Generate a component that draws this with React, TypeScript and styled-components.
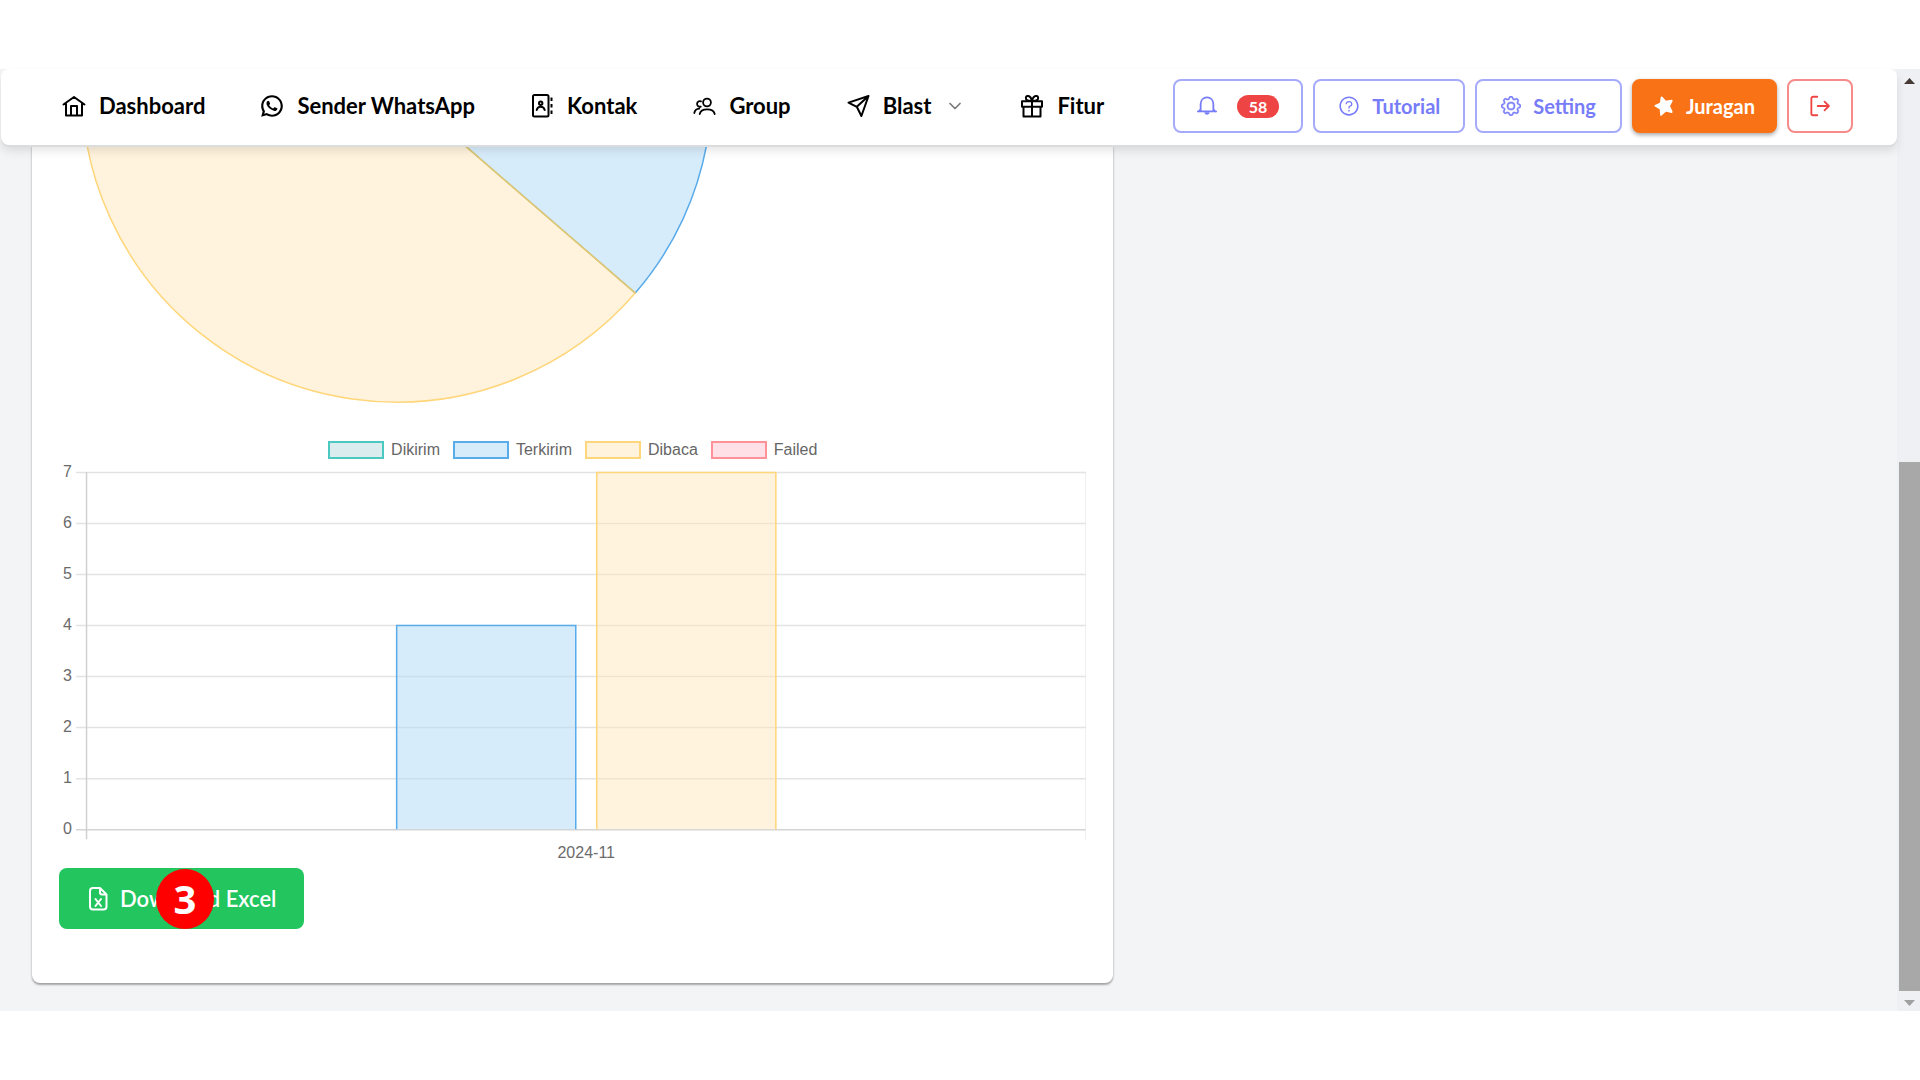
import React from "react";
import styled, { createGlobalStyle, css } from "styled-components";
import { RiWhatsappLine } from "react-icons/ri";
import { AiOutlineQuestionCircle } from "react-icons/ai";
import { BsGear } from "react-icons/bs";
import { FiChevronDown } from "react-icons/fi";

const GlobalStyle = createGlobalStyle`
  *, *::before, *::after { box-sizing: border-box; }
  body {
    margin: 0;
    background: #ffffff;
    font-family: Lato, "Open Sans", sans-serif;
    color: #000000;
  }
`;

const Frame = styled.div`
  display: flex;
  flex-direction: column;
  min-height: 100vh;
  padding: 69px 0 69px;
`;

const Screen = styled.div`
  display: flex;
  flex: 1;
  align-items: stretch;
  background: #f3f4f6;
`;

const Page = styled.div`
  display: flex;
  flex-direction: column;
  flex: 1;
  min-width: 0;
`;

const Header = styled.header`
  position: relative;
  z-index: 1;
  display: flex;
  align-items: center;
  justify-content: space-between;
  min-height: 76px;
  margin-left: 1px;
  padding: 0 44px 2px 62px;
  background: #ffffff;
  border-radius: 8px;
  box-shadow: 0 2px 0 #dadcdd, 0 6px 10px rgba(0, 0, 0, 0.1);
`;

const Nav = styled.nav`
  display: flex;
  align-items: center;
  gap: 56px;
`;

const NavLink = styled.a`
  display: flex;
  align-items: center;
  gap: 14px;
  color: #000000;
  font-size: 22px;
  font-weight: 700;
  line-height: 28px;
  text-decoration: none;
  white-space: nowrap;

  svg {
    flex: none;
  }
`;

const Actions = styled.div`
  display: flex;
  align-items: center;
  gap: 10px;
`;

type Tone = "outline" | "solid" | "danger";

const tones = {
  outline: css`
    color: #777cf8;
    border-color: #a5abfa;
    background: #ffffff;
  `,
  solid: css`
    color: #ffffff;
    border-color: #f97316;
    background: #f97316;
    box-shadow: 0 2px 4px rgba(0, 0, 0, 0.35);
  `,
  danger: css`
    color: #ef4444;
    border-color: #f88a8a;
    background: #ffffff;
  `,
};

const ActionButton = styled.button<{ $tone: Tone; $pad: number }>`
  display: flex;
  align-items: center;
  gap: 12px;
  height: 54px;
  padding: 0 ${(p) => p.$pad}px;
  border: 2px solid;
  border-radius: 8px;
  font: 700 20px/24px Lato, sans-serif;
  white-space: nowrap;
  cursor: pointer;
  ${(p) => tones[p.$tone]}
`;

const Count = styled.span`
  margin-left: 8px;
  padding: 0 12px;
  border-radius: 12px;
  background: #ef4444;
  color: #ffffff;
  font-size: 16px;
  line-height: 23px;
`;

const Main = styled.main`
  flex: 1;
  padding: 0 32px 27px;
`;

const Card = styled.section`
  width: 59%;
  padding: 0 27px 54px;
  background: #ffffff;
  border-radius: 0 0 8px 8px;
  box-shadow: 0 2px 2px rgba(0, 0, 0, 0.3), 0 0 3px rgba(0, 0, 0, 0.12);
`;

const Chart = styled.svg`
  display: block;
  width: 100%;
  height: auto;

  text {
    fill: #6b6b6b;
    font-family: "Liberation Sans", Arial, sans-serif;
    font-size: 16px;
  }
`;

const Legend = styled.ul`
  display: flex;
  justify-content: center;
  gap: 13px;
  margin: 13px 0 1px;
  padding: 0;
  list-style: none;
`;

const LegendItem = styled.li<{ $fill: string; $line: string }>`
  display: flex;
  align-items: center;
  gap: 7px;
  color: #666666;
  font: 16px/19px "Liberation Sans", Arial, sans-serif;

  &::before {
    content: "";
    width: 56px;
    height: 18px;
    border: 2px solid ${(p) => p.$line};
    background: ${(p) => p.$fill};
  }
`;

const Download = styled.div`
  position: relative;
  width: fit-content;
`;

const DownloadButton = styled.button`
  display: flex;
  align-items: center;
  gap: 11px;
  height: 61px;
  padding: 0 28px;
  border: 0;
  border-radius: 8px;
  background: #22c55e;
  color: #ffffff;
  font: 600 22px/28px Lato, sans-serif;
  white-space: nowrap;
  cursor: pointer;
`;

const StepMarker = styled.span`
  position: absolute;
  top: 1px;
  left: 97px;
  display: grid;
  place-items: center;
  width: 58px;
  height: 60px;
  border-radius: 50%;
  background: #ff0000;
  color: #ffffff;
  font: 700 40px/60px "Open Sans", sans-serif;
`;

const Scrollbar = styled.div`
  display: flex;
  flex-direction: column;
  width: 23px;
  padding-left: 2px;
  background: #eff0f3;
`;

const ScrollArrow = styled.svg`
  flex: none;
  width: 21px;
  height: 20px;
`;

const Track = styled.div`
  display: flex;
  flex: 1;
  align-items: flex-end;
`;

const Thumb = styled.div`
  width: 100%;
  height: 58.6%;
  background: #a8a8a8;
`;

const IconSvg = styled.svg`
  flex: none;
  overflow: visible;
  fill: none;
  stroke: currentColor;
  stroke-linecap: round;
  stroke-linejoin: round;
`;

const LineIcon = ({ size = 22, width = 2, children }: { size?: number; width?: number; children: React.ReactNode }) => (
  <IconSvg width={size} height={size} viewBox="0 0 22 22" strokeWidth={width} aria-hidden="true">
    {children}
  </IconSvg>
);

const HouseIcon = () => (
  <LineIcon>
    <path d="M.5 9.500 11 2l10.500 7.500M3 8.500V20.500h16V8.500M8 20.500V11h6v9.500" />
  </LineIcon>
);

const ContactsIcon = () => (
  <LineIcon>
    <rect x="2" y="0" width="15.500" height="21.500" rx="1.500" />
    <circle cx="9.700" cy="8.300" r="1.700" />
    <path d="M5.700 15c.6-2.200 2-3.200 4-3.200s3.400 1 4 3.200" />
    <path d="M20.500 2.500v3.500M20.500 9v3.500M20.500 15.500v3.500" strokeLinecap="butt" />
  </LineIcon>
);

const GroupIcon = () => (
  <LineIcon width={1.8}>
    <circle cx="14" cy="7.500" r="3.900" />
    <path d="M6.700 19c.6-3 3.500-4.700 7.400-4.700s7 1.700 7.600 4.700" />
    <path d="M8 6.400a2.800 2.800 0 1 0-.2 5.200M1.300 18c.4-2.400 2.100-4 5-4.300" />
  </LineIcon>
);

const PlaneIcon = () => (
  <LineIcon>
    <path d="M21.500 1 1.500 7.600l8.300 4.200 4.600 9.200zM21.500 1 9.800 11.800" />
  </LineIcon>
);

const GiftIcon = () => (
  <LineIcon>
    <path d="M1 6.200h20v5.600H1zM2.500 11.800v9.700h17v-9.700M11 6.200v15.300" />
    <path d="M11 6C6 6.300 4.600 4.500 4.900 2.600 5.300.2 9.500-.4 11 6c1.500-6.400 5.700-5.800 6.100-3.400.3 1.900-1.100 3.700-6.100 3.400z" />
  </LineIcon>
);

const BellIcon = () => (
  <LineIcon size={20}>
    <path d="M1 17h20M4 16.600V9.200C4 4.500 7 1.500 11 1.500s7 3 7 7.700v7.400M2 17l2-2.500M20 17l-2-2.500" />
    <path d="M8 18c.4 1.800 1.500 2.600 3 2.600s2.600-.8 3-2.600z" fill="currentColor" stroke="none" />
  </LineIcon>
);

const StarIcon = () => (
  <LineIcon size={20}>
    <path
      d="M8.400 1.500 12.700 6.200 19.500 5.200 16.500 11 19.500 17.600 12.600 16.200 7.800 20.800 7.200 14.100 1.500 10.800 7.400 8.200z"
      fill="currentColor"
    />
  </LineIcon>
);

const LogoutIcon = () => (
  <LineIcon size={20}>
    <path d="M8 .8H3.500a2 2 0 0 0-2 2v16.400a2 2 0 0 0 2 2H8M8.500 11h12M16 6.200l4.800 4.800-4.800 4.800" />
  </LineIcon>
);

const ExcelIcon = () => (
  <LineIcon>
    <path d="M13 0H6a3 3 0 0 0-3 3v15.500a3 3 0 0 0 3 3h10.500a3 3 0 0 0 3-3V6.500zM13 0v4.500a2 2 0 0 0 2 2h4.500" />
    <path d="M8.500 11l5.500 7M14 11l-5.500 7" />
  </LineIcon>
);

const navItems = [
  { label: "Dashboard", icon: <HouseIcon /> },
  { label: "Sender WhatsApp", icon: <RiWhatsappLine size={26} style={{ margin: -2 }} /> },
  { label: "Kontak", icon: <ContactsIcon /> },
  { label: "Group", icon: <GroupIcon /> },
  { label: "Blast", icon: <PlaneIcon />, menu: true },
  { label: "Fitur", icon: <GiftIcon /> },
];

const series = [
  { label: "Dikirim", value: 0, fill: "#dbecef", line: "#4bc9c0" },
  { label: "Terkirim", value: 4, fill: "#d7ecfb", line: "#59abea" },
  { label: "Dibaca", value: 7, fill: "#fff3dd", line: "#ffd67a" },
  { label: "Failed", value: 0, fill: "#ffe0e6", line: "#ff9299" },
];

const PLOT = { left: 27, right: 1027, top: 12, bottom: 369, max: 7 };
const yOf = (value: number) => PLOT.bottom - (value * (PLOT.bottom - PLOT.top)) / PLOT.max;

const PieChart = () => (
  <Chart viewBox="0 0 1027 282" role="img" aria-label="Terkirim 4, Dibaca 7">
    <path d="M338-58V-373A315 315 0 0 1 576 148z" fill="#d7ecfb" stroke="#59abea" strokeWidth="1.500" />
    <path d="M338-58 576 148A315 315 0 1 1 338-373z" fill="#fff3dd" stroke="#ffd67a" strokeWidth="1.500" />
    <path d="M338-58 576 148" stroke="#d9c678" strokeWidth="1.500" />
  </Chart>
);

const BarChart = () => (
  <Chart viewBox="0 0 1027 408" role="img" aria-label="2024-11">
    {Array.from({ length: PLOT.max + 1 }, (_, v) => (
      <g key={v}>
        <line x1={PLOT.left - 10} x2={PLOT.right} y1={yOf(v) + 0.5} y2={yOf(v) + 0.5} stroke={v ? "#e3e3e3" : "#d4d4d4"} strokeWidth="1.500" />
        <text x="13" y={yOf(v) + 5} textAnchor="end">{v}</text>
      </g>
    ))}
    <line x1={PLOT.left + 0.5} x2={PLOT.left + 0.5} y1={PLOT.top} y2={PLOT.bottom + 10} stroke="#d0d0d0" strokeWidth="1.500" />
    <line x1={PLOT.right - 0.5} x2={PLOT.right - 0.5} y1={PLOT.top} y2={PLOT.bottom + 10} stroke="#e3e3e3" />
    {series.map((s, i) => {
      if (!s.value) return null;
      const x = PLOT.left + 110 + i * 200;
      return (
        <g key={s.label}>
          <rect x={x} y={yOf(s.value)} width="180" height={PLOT.bottom - yOf(s.value)} fill={s.fill} />
          {Array.from({ length: s.value - 1 }, (_, k) => (
            <line key={k} x1={x} x2={x + 180} y1={yOf(k + 1) + 0.5} y2={yOf(k + 1) + 0.5} stroke="#000000" strokeOpacity="0.060" strokeWidth="1.500" />
          ))}
          <path d={`M${x + 0.5} ${PLOT.bottom}V${yOf(s.value) + 0.5}h179V${PLOT.bottom}`} fill="none" stroke={s.line} strokeWidth="1.500" />
        </g>
      );
    })}
    <text x="527" y="398" textAnchor="middle">2024-11</text>
  </Chart>
);

export default function App() {
  return (
    <>
      <GlobalStyle />
      <Frame>
        <Screen>
          <Page>
            <Header>
              <Nav>
                {navItems.map((item) => (
                  <NavLink href="#" key={item.label}>
                    {item.icon}
                    {item.label}
                    {item.menu && <FiChevronDown size={20} color="#777777" />}
                  </NavLink>
                ))}
              </Nav>
              <Actions>
                <ActionButton type="button" $tone="outline" $pad={22} aria-label="58">
                  <BellIcon />
                  <Count>58</Count>
                </ActionButton>
                <ActionButton type="button" $tone="outline" $pad={23}>
                  <AiOutlineQuestionCircle size={22} />
                  Tutorial
                </ActionButton>
                <ActionButton type="button" $tone="outline" $pad={24}>
                  <BsGear size={20} strokeWidth={0.4} />
                  Setting
                </ActionButton>
                <ActionButton type="button" $tone="solid" $pad={20}>
                  <StarIcon />
                  Juragan
                </ActionButton>
                <ActionButton type="button" $tone="danger" $pad={21} aria-label="Logout">
                  <LogoutIcon />
                </ActionButton>
              </Actions>
            </Header>
            <Main>
              <Card>
                <PieChart />
                <Legend>
                  {series.map((s) => (
                    <LegendItem key={s.label} $fill={s.fill} $line={s.line}>
                      {s.label}
                    </LegendItem>
                  ))}
                </Legend>
                <BarChart />
                <Download>
                  <DownloadButton type="button">
                    <ExcelIcon />
                    Download Excel
                  </DownloadButton>
                  <StepMarker>3</StepMarker>
                </Download>
              </Card>
            </Main>
          </Page>
          <Scrollbar>
            <ScrollArrow viewBox="0 0 21 20" aria-hidden="true">
              <path d="M5 15 10.500 9 16 15z" fill="#453a35" />
            </ScrollArrow>
            <Track>
              <Thumb />
            </Track>
            <ScrollArrow viewBox="0 0 21 20" aria-hidden="true">
              <path d="M5 9h11l-5.500 6z" fill="#a0a0a0" />
            </ScrollArrow>
          </Scrollbar>
        </Screen>
      </Frame>
    </>
  );
}
